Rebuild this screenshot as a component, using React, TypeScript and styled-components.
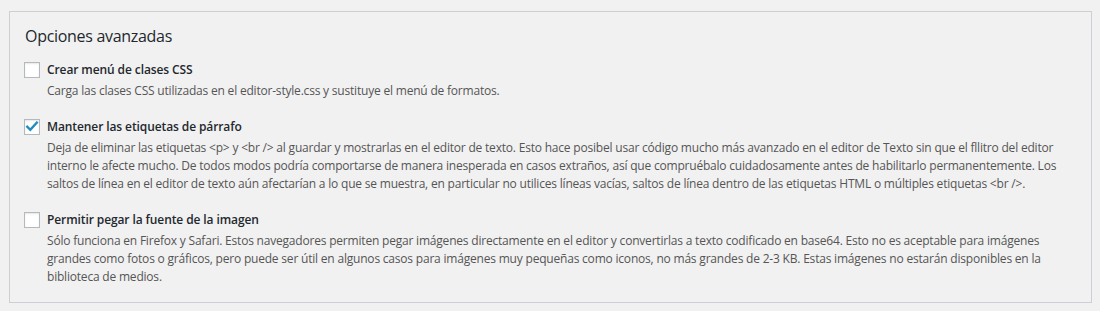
import React from "react";
import styled, { createGlobalStyle } from "styled-components";

const GlobalStyle = createGlobalStyle`
  html, body {
    margin: 0;
    padding: 0;
    background: #f1f1f1;
  }
  body {
    font-family: "Open Sans", "Noto Sans", Arial, sans-serif;
  }
`;

const Page = styled.div`
  padding: 11px 8px 8px 9px;
`;

const Panel = styled.section`
  border: 1px solid #ccd0d4;
  background: #f1f1f1;
  padding: 12px 14px 16px 14px;
`;

const Title = styled.h2`
  margin: 0 0 14px 0;
  font-size: 16px;
  line-height: 24px;
  font-weight: 400;
  color: #23282d;
  letter-spacing: -0.3px;
  padding-left: 1px;
`;

const List = styled.div`
  display: flex;
  flex-direction: column;
  gap: 19px;
`;

const Item = styled.div`
  display: flex;
  flex-direction: column;
  gap: 4px;
`;

const Row = styled.label`
  display: flex;
  align-items: center;
  gap: 7px;
  height: 16px;
  cursor: pointer;
`;

const Box = styled.span`
  width: 16px;
  height: 16px;
  box-sizing: border-box;
  flex: none;
  border: 1px solid #b4b9be;
  background: #fff;
  box-shadow: inset 0 1px 2px rgba(0, 0, 0, 0.1);
  display: flex;
  align-items: center;
  justify-content: center;
`;

const Label = styled.span`
  font-size: 12px;
  font-weight: 600;
  line-height: 16px;
  color: #23282d;
  letter-spacing: -0.1px;
`;

const Desc = styled.p`
  margin: 0 0 0 23px;
  font-size: 12px;
  line-height: 18px;
  color: #555;
  letter-spacing: -0.2px;
`;

const Check = () => (
  <svg width="14" height="14" viewBox="0 0 14 14" aria-hidden="true">
    <path d="M2.3 6.8 L5.3 9.8 L11.8 2.6" fill="none" stroke="#1e8cbe" strokeWidth="2.4" strokeLinecap="square" />
  </svg>
);

type Opt = { label: string; desc: string; checked?: boolean };

const options: Opt[] = [
  {
    label: "Crear menú de clases CSS",
    desc: "Carga las clases CSS utilizadas en el editor-style.css y sustituye el menú de formatos.",
  },
  {
    label: "Mantener las etiquetas de párrafo",
    checked: true,
    desc:
      "Deja de eliminar las etiquetas <p> y <br /> al guardar y mostrarlas en el editor de texto. Esto hace posibel usar código mucho más avanzado en el editor de Texto sin que el fllitro del editor interno le afecte mucho. De todos modos podría comportarse de manera inesperada en casos extraños, así que compruébalo cuidadosamente antes de habilitarlo permanentemente. Los saltos de línea en el editor de texto aún afectarían a lo que se muestra, en particular no utilices líneas vacías, saltos de línea dentro de las etiquetas HTML o múltiples etiquetas <br />.",
  },
  {
    label: "Permitir pegar la fuente de la imagen",
    desc:
      "Sólo funciona en Firefox y Safari. Estos navegadores permiten pegar imágenes directamente en el editor y convertirlas a texto codificado en base64. Esto no es aceptable para imágenes grandes como fotos o gráficos, pero puede ser útil en algunos casos para imágenes muy pequeñas como iconos, no más grandes de 2-3 KB. Estas imágenes no estarán disponibles en la biblioteca de medios.",
  },
];

export default function App() {
  return (
    <>
      <GlobalStyle />
      <Page>
        <Panel>
          <Title>Opciones avanzadas</Title>
          <List>
            {options.map((o) => (
              <Item key={o.label}>
                <Row>
                  <Box>{o.checked && <Check />}</Box>
                  <Label>{o.label}</Label>
                </Row>
                <Desc>{o.desc}</Desc>
              </Item>
            ))}
          </List>
        </Panel>
      </Page>
    </>
  );
}
